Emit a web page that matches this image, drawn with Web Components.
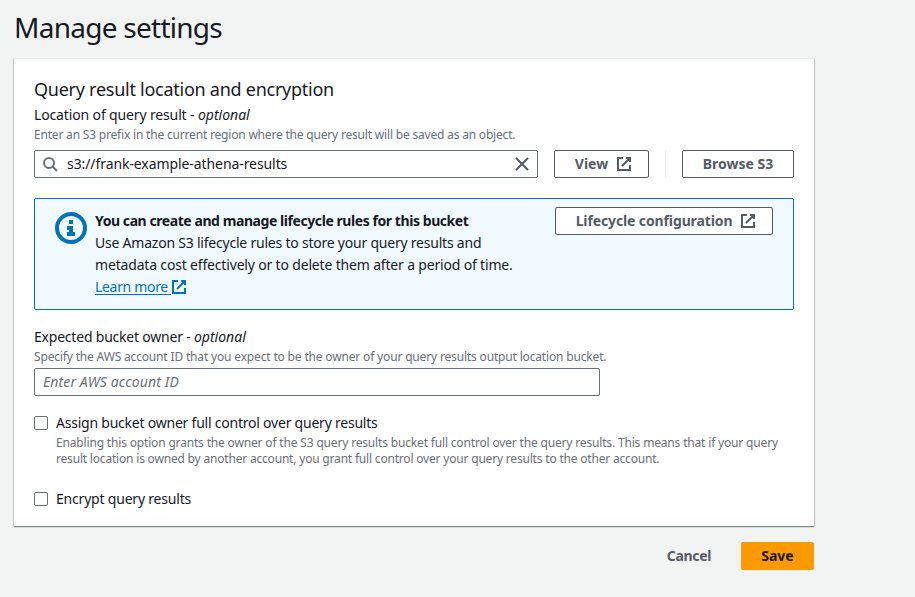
<!DOCTYPE html>
<html lang="en">
<head>
<meta charset="utf-8">
<title>Manage settings</title>
<style>
  body { margin: 0; background: #f2f3f3; color: #16191f; font: 14px/22px "Noto Sans", "Open Sans", sans-serif; }
</style>
</head>
<body>
<settings-page></settings-page>
<script>
const define = (name, html) => {
  const template = document.createElement('template');
  template.innerHTML = html;
  customElements.define(name, class extends HTMLElement {
    constructor() {
      super();
      this.attachShadow({ mode: 'open' }).append(template.content.cloneNode(true));
    }
  });
};

const ICONS = {
  external: '<path d="M10 2h4v4M6 10l8-8M14 9.05V14H2V2h5"/>',
  search: '<circle cx="7" cy="7" r="5"/><path d="M15 15l-4.5-4.5"/>',
  close: '<path d="M2 2l12 12M14 2L2 14"/>',
  info: '<circle cx="8" cy="8" r="7"/><path d="M8 11V8H6M10 11H6M8 4v2"/>'
};
customElements.define('ui-icon', class extends HTMLElement {
  connectedCallback() {
    if (this.shadowRoot) return;
    this.attachShadow({ mode: 'open' }).innerHTML = `
      <style>
        :host { display: block; flex: none; width: 16px; height: 16px; }
        svg { display: block; width: 100%; height: 100%; fill: none; stroke: currentColor; stroke-width: 2; }
      </style>
      <svg viewBox="0 0 16 16" aria-hidden="true">${ICONS[this.getAttribute('name')]}</svg>`;
  }
});

define('ui-button', `
  <style>
    :host { display: block; box-sizing: border-box; flex: none; height: 28px; }
    button { all: unset; box-sizing: border-box; display: flex; align-items: center; justify-content: center; gap: 8px;
      width: 100%; height: 100%; border: 1px solid #545b64; border-radius: 2px; background: #fff;
      color: #545b64; font-weight: 700; white-space: nowrap; cursor: pointer; }
    :host([external]) button { padding-left: 4px; }
    :host([variant="primary"]) button { background: #f90; border-color: #f90; color: #16191f; }
    :host([variant="link"]) button { background: transparent; border-color: transparent; }
  </style>
  <button><slot></slot><slot name="icon"></slot></button>`);

define('form-field', `
  <style>
    :host { display: block; }
    .label { height: 22px; white-space: pre; }
    .hint { box-sizing: border-box; height: 17px; padding-top: 1px; font-size: 12px; line-height: 16px; color: #687078; white-space: nowrap; }
    .control { display: flex; margin-top: var(--control-gap, 3px); }
  </style>
  <div class="label"><slot name="label"></slot></div>
  <div class="hint"><slot name="hint"></slot></div>
  <div class="control"><slot></slot></div>`);

define('text-box', `
  <style>
    :host { display: flex; box-sizing: border-box; align-items: center; gap: 8px; height: 28px; padding: 0 7px;
      border: 1px solid #687078; border-radius: 2px; background: #fff; white-space: nowrap; }
    .value { flex: 1; }
    :host([empty]) .value { color: #687078; font-style: italic; padding-left: 1px; }
    ::slotted(ui-icon) { color: #545b64; }
  </style>
  <slot name="before"></slot><span class="value"><slot></slot></span><slot name="after"></slot>`);

define('info-alert', `
  <style>
    :host { display: flex; box-sizing: border-box; height: 112px; padding: 8px 20px 11px;
      border: 1px solid #0073bb; border-radius: 2px; background: #f1faff; }
    ui-icon { width: 32px; height: 32px; margin: 5px 8px 0 0; color: #0073bb; }
    .text { flex: 1; padding-top: 3px; white-space: nowrap; }
    .heading { font-weight: 700; }
  </style>
  <ui-icon name="info"></ui-icon>
  <div class="text"><div class="heading"><slot name="heading"></slot></div><slot></slot></div>
  <slot name="action"></slot>`);

define('check-option', `
  <style>
    :host { display: grid; grid-template-columns: 14px 1fr; column-gap: 8px; }
    .box { box-sizing: border-box; width: 14px; height: 14px; margin-top: 4px; border: 1px solid #687078;
      border-radius: 2px; background: #fff; }
    .hint { grid-column: 2; padding-top: 1px; font-size: 12px; line-height: 16px; color: #687078; white-space: nowrap; }
  </style>
  <span class="box" role="checkbox" aria-checked="false"></span>
  <div><slot></slot></div>
  <div class="hint"><slot name="hint"></slot></div>`);

define('settings-panel', `
  <style>
    :host { display: block; box-sizing: border-box; width: 800px; height: 468px; padding: 19px 20px 0; background: #fff;
      border-top: 1px solid #eaeded;
      box-shadow: 0 1px 1px 0 rgba(0,28,36,.3), 1px 1px 1px 0 rgba(0,28,36,.15), -1px 1px 1px 0 rgba(0,28,36,.15); }
    h2 { margin: 0; height: 26px; font-size: 18px; line-height: 22px; font-weight: 400; letter-spacing: -.26px; }
  </style>
  <h2><slot name="heading"></slot></h2>
  <slot></slot>`);

define('settings-page', `
  <style>
    :host { display: block; box-sizing: border-box; width: 828px; height: 597px; padding: 9px 14px 0; }
    h1 { margin: 0; height: 49px; font-size: 28px; line-height: 36px; font-weight: 400; letter-spacing: -.73px; }
    div { white-space: nowrap; }
    .location text-box { width: 504px; }
    .location { --control-gap: 7px; }
    .divider { width: 1px; height: 28px; margin: 0 16px; background: #eaeded; }
    info-alert { margin: 20px 0 16px; }
    .owner text-box { width: 566px; }
    check-option { margin-top: 16px; }
    check-option + check-option { margin-top: 21px; }
    a { display: flex; align-items: center; height: 22px; color: #0073bb; }
    a span { white-space: pre; letter-spacing: -.32px; box-shadow: inset 0 -1px #0073bb; line-height: 16px; }
    footer { display: flex; justify-content: flex-end; margin-top: 16px; }
  </style>
  <h1>Manage settings</h1>
  <settings-panel>
    <span slot="heading">Query result location and encryption</span>
    <form-field class="location">
      <span slot="label"><span style="letter-spacing:-.14px">Location of query result - </span><i>optional</i></span>
      <span slot="hint" style="letter-spacing:-.19px">Enter an S3 prefix in the current region where the query result will be saved as an object.</span>
      <text-box>
        <ui-icon slot="before" name="search" style="color:#687078"></ui-icon>
        <span style="letter-spacing:-.08px;padding-left:1px">s3://frank-example-athena-results</span>
        <ui-icon slot="after" name="close"></ui-icon>
      </text-box>
      <ui-button external style="width:95px;margin-left:16px">View<ui-icon slot="icon" name="external"></ui-icon></ui-button>
      <span class="divider"></span>
      <ui-button style="width:112px">Browse S3</ui-button>
    </form-field>
    <info-alert>
      <span slot="heading" style="letter-spacing:-.43px">You can create and manage lifecycle rules for this bucket</span>
      <div style="letter-spacing:-.22px">Use Amazon S3 lifecycle rules to store your query results and</div>
      <div style="letter-spacing:-.172px">metadata cost effectively or to delete them after a period of time.</div>
      <a><span>Learn more </span><ui-icon name="external"></ui-icon></a>
      <ui-button external slot="action" style="width:218px;letter-spacing:-.12px">Lifecycle configuration<ui-icon slot="icon" name="external"></ui-icon></ui-button>
    </info-alert>
    <form-field class="owner">
      <span slot="label"><span style="letter-spacing:-.21px">Expected bucket owner - </span><i>optional</i></span>
      <span slot="hint" style="letter-spacing:-.165px">Specify the AWS account ID that you expect to be the owner of your query results output location bucket.</span>
      <text-box empty><span style="letter-spacing:.12px">Enter AWS account ID</span></text-box>
    </form-field>
    <check-option>
      <span style="letter-spacing:-.225px">Assign bucket owner full control over query results</span>
      <div slot="hint" style="letter-spacing:-.167px">Enabling this option grants the owner of the S3 query results bucket full control over the query results. This means that if your query</div>
      <div slot="hint" style="letter-spacing:-.19px">result location is owned by another account, you grant full control over your query results to the other account.</div>
    </check-option>
    <check-option><span style="letter-spacing:-.2px">Encrypt query results</span></check-option>
  </settings-panel>
  <footer>
    <ui-button variant="link" style="width:84px;margin-right:10px;letter-spacing:-.3px">Cancel</ui-button>
    <ui-button variant="primary" style="width:73px">Save</ui-button>
  </footer>`);
</script>
</body>
</html>
